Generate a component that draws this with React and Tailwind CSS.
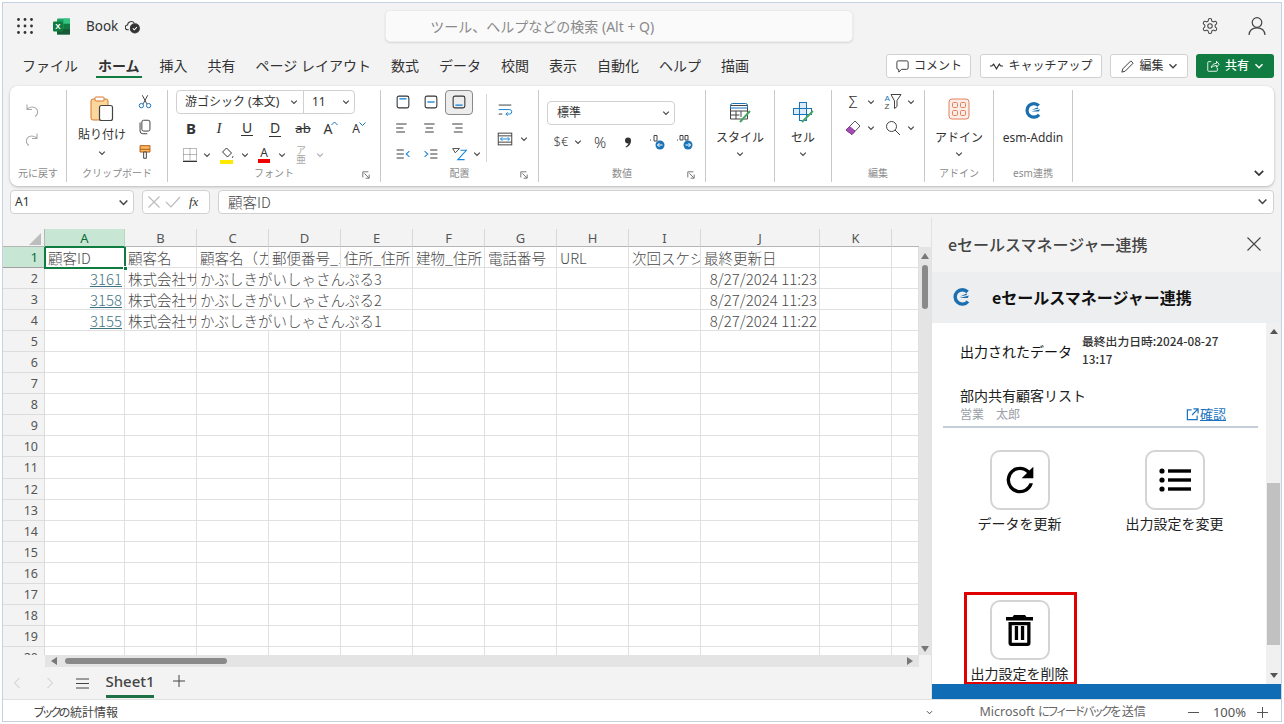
import React from "react";

const UI = { fontFamily: '"Noto Sans","Noto Sans CJK JP",sans-serif' };
const CJK = { fontFamily: '"Noto Sans CJK JP","Noto Sans",sans-serif' };

const Ic = ({ s = 20, children, className = "" }) => (
  <svg width={s} height={s} viewBox="0 0 20 20" fill="none" stroke="currentColor" strokeWidth="1.1" className={`shrink-0 ${className}`}>
    {children}
  </svg>
);

const Chev = ({ w = 8, className = "text-[#444]" }) => (
  <svg width={w} height={w} viewBox="0 0 10 10" fill="none" stroke="currentColor" strokeWidth="1.4" className={`shrink-0 ${className}`}>
    <path d="M1.5 3.2 5 6.8l3.5-3.6" />
  </svg>
);

const Slot = ({ w, h = 26, children, className = "" }) => (
  <div className={`flex items-center justify-center shrink-0 ${className}`} style={{ width: w, height: h }}>{children}</div>
);

const Logo = ({ s = 20 }) => (
  <svg width={s} height={s} viewBox="0 0 20 20" fill="none">
    <path d="M16.6 15A8 8 0 1 1 16.2 4.4" stroke="#1a6fb0" strokeWidth="3.8" />
    <path d="M7.4 11.2 17.6 8.4l-1.2 2.8H7.4Z M7.6 9.4 15 6.2l.6 1.6-8 1.6Z" fill="#1a6fb0" />
  </svg>
);

const Launcher = () => (
  <svg width="8" height="8" viewBox="0 0 10 10" fill="none" stroke="#555" strokeWidth="1">
    <path d="M1 8V1h7M3 3l5.5 5.5M9 4.5V9H4.5" />
  </svg>
);

const Group = ({ w, label, children, launcher, className = "" }) => (
  <div className={`flex shrink-0 h-[92px] border-r border-[#c8c8c8] flex-col relative ${className}`} style={{ width: w }}>
    <div className="flex-1 min-h-0">{children}</div>
    <div className="h-[16px] pb-[2px] flex items-center justify-center text-[10px] leading-none text-[#8c8c8c]">
      {label}
      {launcher && <span className="absolute right-[10px] bottom-[3px] flex"><Launcher /></span>}
    </div>
  </div>
);

const Big = ({ icon, text, label, w, top = "pt-[12px]", gap = "mt-[5px]" }) => (
  <Group w={w} label={label}>
    <div className={`flex flex-col items-center ${top}`}>
      <div className="h-[26px] flex items-center justify-center">{icon}</div>
      <div className={`text-[12px] leading-[16px] ${gap} text-[#333] whitespace-nowrap`}>{text}</div>
      {text !== "esm-Addin" && <div className="mt-[4px] flex"><Chev /></div>}
    </div>
  </Group>
);

const tabs = ["ファイル", "ホーム", "挿入", "共有", "ページ レイアウト", "数式", "データ", "校閲", "表示", "自動化", "ヘルプ", "描画"];

const AlignBox = ({ y }) => (
  <Ic s={18}>
    <rect x="3.5" y="3.5" width="13" height="13" rx="2" stroke="#333" strokeWidth="1.2" />
    <path d={`M6 ${y}h8`} stroke="#1a86d8" strokeWidth="1.5" />
  </Ic>
);
const Lines = ({ a, b, c }) => (
  <Ic s={16}>
    <path d={`M${a} 5h13M${b} 10h9M${c} 15h11`} stroke="#333" strokeWidth="1.2" />
  </Ic>
);

function TitleBar() {
  return (
    <div className="h-[46px] flex items-center shrink-0 relative">
      <div className="w-[44px] flex justify-center">
        <svg width="16" height="16" viewBox="0 0 16 16" fill="#333">
          {[1.5, 8, 14.5].flatMap((y) => [1.5, 8, 14.5].map((x) => <circle key={`${x}-${y}`} cx={x} cy={y} r="1.4" />))}
        </svg>
      </div>
      <svg width="17" height="17" viewBox="0 0 17 17" className="ml-[6px]">
        <rect x="4" y="0.5" width="13" height="16" rx="1" fill="#21a366" />
        <rect x="10.5" y="0.5" width="6.5" height="5.3" fill="#33c481" />
        <rect x="10.5" y="5.8" width="6.5" height="5.3" fill="#107c41" />
        <rect x="4" y="11" width="13" height="5.5" fill="#185c37" />
        <rect x="0" y="3.5" width="10" height="10" rx="1" fill="#107c41" />
        <text x="5" y="11.4" fontSize="8" fontWeight="700" fill="#fff" textAnchor="middle" fontFamily="Liberation Sans">X</text>
      </svg>
      <span className="ml-[16px] text-[13.5px] text-[#333]">Book</span>
      <span className="ml-[7px] text-[#333] flex">
        <svg width="15" height="15" viewBox="0 0 16 16" fill="none" stroke="#333" strokeWidth="1.1">
          <path d="M4 11.5H3a2.5 2.5 0 0 1-.3-5A4 4 0 0 1 10 4.5" />
          <circle cx="10.5" cy="10" r="4.8" fill="#333" />
          <path d="m8.3 10 1.6 1.6 2.8-3" stroke="#fff" />
        </svg>
      </span>
      <div className="ml-[245px] w-[468px] h-[32px] bg-[#fafafa] border border-[#ececec] rounded-[5px] shadow-[0_1px_2px_rgba(0,0,0,0.12)] flex items-center pl-[44px] text-[14px] text-[#8a8a8a]">
        ツール、ヘルプなどの検索 (Alt + Q)
      </div>
      <div className="flex-1" />
      <span className="mr-[28px] text-[#444] flex">
        <svg width="18" height="18" viewBox="0 0 24 24" fill="none" stroke="currentColor" strokeWidth="1.4">
          <path d="M12.2 2h-.4a2 2 0 0 0-2 2v.2a2 2 0 0 1-1 1.7l-.4.3a2 2 0 0 1-2 0l-.2-.1a2 2 0 0 0-2.7.7l-.2.4a2 2 0 0 0 .7 2.7l.2.1a2 2 0 0 1 1 1.7v.5a2 2 0 0 1-1 1.8l-.2.1a2 2 0 0 0-.7 2.7l.2.4a2 2 0 0 0 2.7.7l.2-.1a2 2 0 0 1 2 0l.4.3a2 2 0 0 1 1 1.7v.2a2 2 0 0 0 2 2h.4a2 2 0 0 0 2-2v-.2a2 2 0 0 1 1-1.7l.4-.3a2 2 0 0 1 2 0l.2.1a2 2 0 0 0 2.7-.7l.2-.4a2 2 0 0 0-.7-2.7l-.2-.1a2 2 0 0 1-1-1.8v-.5a2 2 0 0 1 1-1.7l.2-.1a2 2 0 0 0 .7-2.7l-.2-.4a2 2 0 0 0-2.7-.7l-.2.1a2 2 0 0 1-2 0l-.4-.3a2 2 0 0 1-1-1.7V4a2 2 0 0 0-2-2Z" />
          <circle cx="12" cy="12" r="3" />
        </svg>
      </span>
      <span className="mr-[14px] text-[#444] flex">
        <svg width="20" height="20" viewBox="0 0 20 20" fill="none" stroke="currentColor" strokeWidth="1.2">
          <circle cx="10" cy="6.5" r="4.8" />
          <path d="M2 19c.3-4.5 3.4-7.2 8-7.2s7.7 2.7 8 7.2" />
        </svg>
      </span>
    </div>
  );
}

const TopBtn = ({ w, ml, children }) => (
  <div className="h-[24px] border border-[#d1d1d1] bg-white rounded-[3px] flex items-center justify-center gap-[4px] text-[12px] text-[#333] shrink-0" style={{ width: w, marginLeft: ml }}>
    {children}
  </div>
);

function TabRow() {
  return (
    <div className="h-[37px] flex shrink-0 pl-[19px] pr-[7px]">
      <div className="flex gap-[20px] text-[14px] text-[#333] h-[32px] items-center">
        {tabs.map((t) => (
          <div key={t} className={`relative whitespace-nowrap ${t === "ホーム" ? "font-bold" : ""}`}>
            {t}
            {t === "ホーム" && <div className="absolute left-[-2px] right-[-2px] top-[21px] h-[2px] bg-[#107c41]" />}
          </div>
        ))}
      </div>
      <div className="flex-1" />
      <div className="flex pt-[5px]">
        <TopBtn w={85}>
          <svg width="15" height="15" viewBox="0 0 16 16" fill="none" stroke="#333"><path d="M2 3.5A1.5 1.5 0 0 1 3.5 2h9A1.5 1.5 0 0 1 14 3.5v6a1.5 1.5 0 0 1-1.5 1.5H7l-3 3v-3h-.5A1.5 1.5 0 0 1 2 9.5z" /></svg>
          コメント
        </TopBtn>
        <TopBtn w={122} ml={9}>
          <svg width="15" height="10" viewBox="0 0 16 10" fill="none" stroke="#333" strokeWidth="1.2"><path d="M1 5h2l2-2 3 5 3-5 1.5 2H15" /></svg>
          キャッチアップ
        </TopBtn>
        <TopBtn w={78} ml={8}>
          <svg width="15" height="15" viewBox="0 0 16 16" fill="none" stroke="#333"><path d="m2 14 1-3.5L11.5 2 14 4.5 5.5 13z" /></svg>
          編集
          <Chev w={10} />
        </TopBtn>
        <div className="ml-[8px] w-[78px] h-[24px] bg-[#107c41] rounded-[3px] text-white text-[12px] font-medium flex items-center justify-center gap-[5px]">
          <svg width="14" height="14" viewBox="0 0 16 16" fill="none" stroke="#fff"><path d="M6 3H3a1 1 0 0 0-1 1v9a1 1 0 0 0 1 1h9a1 1 0 0 0 1-1v-3M6 10c.5-3.5 3-5 6-5V2.5l3 3.5-3 3.5V7.5c-2.5 0-4.5 1-6 2.5Z" /></svg>
          共有
          <Chev w={10} className="text-white" />
        </div>
      </div>
    </div>
  );
}

function Ribbon() {
  return (
    <div className="mx-[7px] h-[100px] bg-white rounded-[8px] shadow-[0_1px_3px_rgba(0,0,0,0.25)] shrink-0 flex items-center relative text-[#333]">
      <Group w={57} label="元に戻す">
        <div className="flex flex-col items-center pl-[1px] pt-[11px] gap-[9px] text-[#a8a8a8] w-[42px]">
          <Ic><path d="M5 3.5v5h5M5 8.5c3-3.5 8-3 10 0 1.5 2.5.5 5.5-2 7" /></Ic>
          <Ic><path d="M15 3.5v5h-5M15 8.5c-3-3.5-8-3-10 0-1.5 2.5-.5 5.5 2 7" /></Ic>
        </div>
      </Group>
      <Group w={101} label="クリップボード">
        <div className="flex">
          <div className="w-[68px] ml-[1px] flex flex-col items-center pt-[6px]">
            <svg width="24" height="26" viewBox="0 0 24 26" fill="none">
              <rect x="1" y="3" width="17" height="21" rx="2" fill="#fbd79b" stroke="#d9792b" />
              <rect x="5" y="1" width="9" height="4" rx="1" fill="#fff" stroke="#d9792b" />
              <rect x="9.5" y="9.5" width="13" height="15" rx="2" fill="#fff" stroke="#444" strokeWidth="1.2" />
            </svg>
            <div className="text-[12px] leading-[16px] mt-[5px]">貼り付け</div>
            <div className="mt-[6px] flex"><Chev /></div>
          </div>
          <div className="flex flex-col items-center w-[18px] -mt-[1px]">
            <Slot w={20} h={25}>
              <Ic s={18}>
                <path d="M7 2.5 12 12M13 2.5 8 12" stroke="#444" />
                <circle cx="6" cy="14" r="2.4" stroke="#1a74b8" />
                <circle cx="14" cy="14" r="2.4" stroke="#1a74b8" />
              </Ic>
            </Slot>
            <Slot w={20} h={25}>
              <Ic s={18}>
                <rect x="6.5" y="2.5" width="9" height="12" rx="2" stroke="#444" />
                <path d="M4.5 5v9.5a3 3 0 0 0 3 3h5" stroke="#444" />
              </Ic>
            </Slot>
            <Slot w={20} h={26}>
              <Ic s={18}>
                <path d="M4.5 3h11v7h-11z" fill="#fbb962" stroke="#b35c12" />
                <path d="M4.5 7h11" stroke="#b35c12" />
                <path d="M8.5 10h3v7h-3z" fill="#fff" stroke="#444" />
              </Ic>
            </Slot>
          </div>
        </div>
      </Group>
      <Group w={213} label="フォント" launcher>
        <div className="pl-[8px]">
          <div className="w-[179px] h-[24px] border border-[#d1d1d1] rounded-[4px] flex items-center text-[12px]">
            <div className="w-[127px] h-full flex items-center justify-between pl-[8px] pr-[5px] border-r border-[#d1d1d1]">
              <span>游ゴシック (本文)</span>
              <Chev />
            </div>
            <div className="flex-1 flex items-center justify-between pl-[8px] pr-[4px]">
              <span>11</span>
              <Chev />
            </div>
          </div>
          <div className="flex items-center ml-[1px] h-[27px] mt-[1px]">
            <Slot w={28}><span className="text-[15px] font-bold">B</span></Slot>
            <Slot w={28}><span className="text-[15px] italic" style={{ fontFamily: "Liberation Serif" }}>I</span></Slot>
            <Slot w={28}><span className="text-[14px] border-b border-[#333] leading-[14px] px-[1px]">U</span></Slot>
            <Slot w={28}><span className="text-[14px] border-b border-[#333] leading-[14px] px-[1px] pb-[1px]">D</span></Slot>
            <Slot w={28}><span className="text-[13px] line-through">ab</span></Slot>
            <Slot w={28}><span className="text-[14px] relative pr-[6px]">A<svg width="7" height="5" viewBox="0 0 7 5" className="absolute right-0 top-[3px]" fill="none" stroke="#1a74b8"><path d="m.5 4 3-3 3 3" /></svg></span></Slot>
            <Slot w={28}><span className="text-[12px] relative pr-[6px]">A<svg width="7" height="5" viewBox="0 0 7 5" className="absolute right-0 top-[2px]" fill="none" stroke="#1a74b8"><path d="m.5.5 3 3 3-3" /></svg></span></Slot>
          </div>
          <div className="flex items-center h-[26px] ml-[4px]">
            <Slot w={20}>
              <svg width="14" height="14" viewBox="0 0 14 14" fill="none" stroke="#777" strokeDasharray="1 1">
                <path d="M.5.5h13v12H.5zM7 .5v12M.5 6.5h13" />
                <path d="M0 13.5h14" stroke="#333" strokeDasharray="none" />
              </svg>
            </Slot>
            <Slot w={14}><Chev /></Slot>
            <Slot w={26}>
              <svg width="14" height="17" viewBox="0 0 14 17" fill="none" stroke="#333">
                <path d="m6.5 1 5 5-4 4-5-5z" />
                <path d="M13 9c0 1-1 2-1 2" />
                <rect x="0" y="13" width="13" height="4" fill="#ffeb00" stroke="none" />
              </svg>
            </Slot>
            <Slot w={10}><Chev /></Slot>
            <Slot w={28}>
              <div className="flex flex-col items-center leading-none">
                <span className="text-[12px] leading-[12px]">A</span>
                <div className="w-[12px] h-[4px] bg-[#ee0000]" />
              </div>
            </Slot>
            <Slot w={8}><Chev /></Slot>
            <Slot w={30}><span className="text-[10px] text-[#aaa] leading-[9px] text-center">ア<br />亜</span></Slot>
            <Slot w={8}><Chev className="text-[#aaa]" /></Slot>
          </div>
        </div>
      </Group>
      <Group w={158} label="配置" launcher>
        <div className="flex">
          <div className="w-[106px]">
            <div className="flex pl-[8px] items-center h-[26px] -mt-[1px]">
              <Slot w={28} h={26}><AlignBox y={6.5} /></Slot>
              <Slot w={28} h={26}><AlignBox y={10} /></Slot>
              <Slot w={28} h={25} className="border border-[#8a8a8a] rounded-[4px] bg-[#ededed]"><AlignBox y={13.5} /></Slot>
            </div>
            <div className="flex pl-[8px] h-[26px]">
              <Slot w={28}><Lines a={1.5} b={1.5} c={1.5} /></Slot>
              <Slot w={28}><Lines a={1.5} b={3.5} c={2.5} /></Slot>
              <Slot w={28}><Lines a={1.5} b={5.5} c={3.5} /></Slot>
            </div>
            <div className="flex pl-[8px] h-[26px]">
              <Slot w={28}><Ic s={16}><path d="M2 5h9M2 10h9M2 15h9" stroke="#333" strokeWidth="1.2" /><path d="m18 6.5-4 3.5 4 3.5" stroke="#1a86d8" strokeWidth="1.3" /></Ic></Slot>
              <Slot w={28}><Ic s={16}><path d="M9 5h9M9 10h9M9 15h9" stroke="#333" strokeWidth="1.2" /><path d="m2 6.5 4 3.5-4 3.5" stroke="#1a86d8" strokeWidth="1.3" /></Ic></Slot>
              <Slot w={28}><Ic s={17}><path d="M2 3h8L5 8z" stroke="#444" /><path d="M11 5h7l-10 11h8" stroke="#1a86d8" strokeWidth="1.3" /></Ic></Slot>
              <Slot w={8}><Chev /></Slot>
            </div>
          </div>
          <div className="border-l border-[#d5d5d5] h-[68px] mt-[4px] ml-[-1px] pl-[8px]">
            <Slot w={20} h={28} className="mt-[2px]">
              <Ic s={18}><path d="M3 4.5h14M3 14.5h4" stroke="#444" /><path d="M3 9.5h12a2.5 2.5 0 0 1 0 5h-4m2-2-2 2 2 2" stroke="#1a86d8" /></Ic>
            </Slot>
            <div className="flex items-center mt-[1px]">
              <Slot w={20} h={28}>
                <Ic s={18}><rect x="2.5" y="3.5" width="15" height="13" stroke="#444" /><path d="M2.5 6.5h15M2.5 13.5h15" stroke="#444" /><path d="M5 10h10M7 8 5 10l2 2M13 8l2 2-2 2" stroke="#1a86d8" /></Ic>
              </Slot>
              <Slot w={18}><Chev /></Slot>
            </div>
          </div>
        </div>
      </Group>
      <Group w={167} label="数値" launcher>
        <div className="pl-[8px] pt-[11px]">
          <div className="w-[128px] h-[24px] border border-[#d1d1d1] rounded-[4px] flex items-center justify-between pl-[9px] pr-[4px] text-[12px]">
            <span>標準</span><Chev />
          </div>
          <div className="flex items-center h-[26px] mt-[4px] pl-[4px]">
            <Slot w={20}><span className="text-[13px] font-light">$€</span></Slot>
            <Slot w={14}><Chev /></Slot>
            <Slot w={28} className="ml-[1px]"><span className="text-[15px] font-light">%</span></Slot>
            <Slot w={28}>
              <svg width="8" height="11" viewBox="0 0 8 11" fill="#333"><circle cx="4" cy="3.5" r="3" /><path d="M6.8 4C7 7 5 9.5 2 10.5L1.5 9.7C3.5 8.8 4.5 7 4.5 5.5Z" /></svg>
            </Slot>
            <Slot w={29}>
              <svg width="16" height="16" viewBox="0 0 16 16" fill="none"><path d="M1 6h1M5 1.5h3V7H5z" stroke="#444" /><circle cx="11" cy="11" r="4.5" fill="#1a74b8" /><path d="M13.5 11h-5m2-2-2 2 2 2" stroke="#fff" /></svg>
            </Slot>
            <Slot w={28}>
              <svg width="16" height="16" viewBox="0 0 16 16" fill="none"><path d="M0 6h1M3 1.5h3V6H3zM8 1.5h3V6H8z" stroke="#444" /><circle cx="11" cy="11" r="4.5" fill="#1a74b8" /><path d="M8.5 11h5m-2-2 2 2-2 2" stroke="#fff" /></svg>
            </Slot>
          </div>
        </div>
      </Group>
      <Big w={69} text="スタイル" top="pt-[9px]" icon={
        <svg width="22" height="22" viewBox="0 0 22 22" fill="none" stroke="#444">
          <path d="M1.5 4.5h17V18h-17zM1.5 10h17M1.5 14h9M7 10v8M12 10v6" />
          <path d="M1.5 4.5a2 2 0 0 1 2-2h13a2 2 0 0 1 2 2v2.5h-17z" stroke="#1a74b8" />
          <path d="M11 21 21 10" stroke="#4aa564" strokeWidth="2" />
        </svg>} />
      <Big w={57} text="セル" top="pt-[9px]" icon={
        <svg width="22" height="22" viewBox="0 0 22 22" fill="none" stroke="#1a74b8">
          <rect x="7.5" y="1.5" width="7" height="6" fill="#dcecf8" />
          <rect x="1.5" y="7.5" width="7" height="6" fill="#dcecf8" />
          <rect x="7.5" y="7.5" width="7" height="6" fill="#dcecf8" />
          <rect x="14.5" y="7.5" width="5" height="6" />
          <rect x="7.5" y="13.5" width="7" height="6" />
          <path d="M10 21 21 10" stroke="#4aa564" strokeWidth="2" />
        </svg>} />
      <Group w={93} label="編集">
        <div className="pl-[10px]">
          <div className="flex items-center h-[26px] -mt-[1px]">
            <Slot w={22}><span className="text-[16px] font-light">Σ</span></Slot>
            <Slot w={14}><Chev /></Slot>
            <Slot w={28} className="ml-[1px]">
              <svg width="18" height="18" viewBox="0 0 18 18" fill="none" stroke="#444"><path d="M7 1.5h10l-4 6v6l-2.5 2V8z" /><text x="0.5" y="8" fontSize="8" fill="#1a74b8" stroke="none" fontFamily="Liberation Sans">A</text><text x="0.5" y="16" fontSize="8" fill="#444" stroke="none" fontFamily="Liberation Sans">Z</text></svg>
            </Slot>
            <Slot w={8}><Chev /></Slot>
          </div>
          <div className="flex items-center h-[26px]">
            <Slot w={22}>
              <svg width="17" height="16" viewBox="0 0 17 16"><path d="m1 10 6 4.5L15 6l-5-5z" fill="#fff" stroke="#555" /><path d="m1 10 6 4.5L10 11 4.5 6.5z" fill="#a64db5" stroke="#843a95" /></svg>
            </Slot>
            <Slot w={14}><Chev /></Slot>
            <Slot w={28} className="ml-[1px]">
              <svg width="16" height="16" viewBox="0 0 16 16" fill="none" stroke="#444"><circle cx="6.5" cy="6.5" r="5" /><path d="m10 10 5 5" /></svg>
            </Slot>
            <Slot w={8}><Chev /></Slot>
          </div>
        </div>
      </Group>
      <Big w={69} text="アドイン" label="アドイン" top="pt-[6px]" gap="mt-[8px]" icon={
        <svg width="22" height="22" viewBox="0 0 22 22" fill="none">
          <rect x="1" y="1" width="20" height="20" rx="3" fill="#fbeee8" stroke="#e5805c" />
          <g stroke="#e5805c"><rect x="4.5" y="4.5" width="5" height="5" rx="1.2" /><rect x="12.5" y="4.5" width="5" height="5" rx="1.2" /><rect x="4.5" y="12.5" width="5" height="5" rx="1.2" /><rect x="12.5" y="12.5" width="5" height="5" rx="1.2" /></g>
        </svg>} />
      <Big w={79} text="esm-Addin" label="esm連携" top="pt-[7px]" gap="mt-[7px]" icon={<Logo s={17} />} />
      <span className="absolute right-[9px] bottom-[7px] flex"><Chev w={12} className="text-[#333]" /></span>
    </div>
  );
}

function FormulaBar() {
  return (
    <div className="h-[24px] mt-[4px] mx-[7px] flex shrink-0 text-[#333]">
      <div className="w-[124px] bg-white border border-[#d1d1d1] rounded-[4px] flex items-center justify-between pl-[4px] pr-[4px] text-[12px]">
        A1<Chev w={11} />
      </div>
      <div className="w-[68px] ml-[8px] bg-white border border-[#d1d1d1] rounded-[4px] flex items-center pl-[4px] gap-[4px]">
        <svg width="14" height="14" viewBox="0 0 14 14" fill="none" stroke="#bcbcbc" strokeWidth="1.2"><path d="m1.5 1.5 11 11m0-11-11 11" /></svg>
        <svg width="16" height="14" viewBox="0 0 16 14" fill="none" stroke="#bcbcbc" strokeWidth="1.2"><path d="m1 7 5 5L15 2" /></svg>
        <span className="ml-[4px] text-[13px] italic" style={{ fontFamily: "Liberation Serif" }}>fx</span>
      </div>
      <div className="flex-1 ml-[8px] bg-white border border-[#d1d1d1] rounded-[4px] flex items-center justify-between pl-[9px] pr-[5px] pb-[1px] text-[14.5px] font-light text-[#444]" style={CJK}>
        顧客ID<Chev w={11} />
      </div>
    </div>
  );
}

const cols = [["A", 80], ["B", 72], ["C", 72], ["D", 72], ["E", 72], ["F", 72], ["G", 72], ["H", 72], ["I", 72], ["J", 119], ["K", 72], ["", 27]];
const headRow = ["顧客ID", "顧客名", "顧客名（カナ）", "郵便番号_1", "住所_住所", "建物_住所", "電話番号", "URL", "次回スケジュール", "最終更新日", "", ""];
const data = { 2: ["3161", "3"], 3: ["3158", "2"], 4: ["3155", "1"] };
const dates = { 2: "8/27/2024 11:23", 3: "8/27/2024 11:23", 4: "8/27/2024 11:22" };

function Row({ n }) {
  const sel = n === 1;
  const d = data[n];
  return (
    <div className="flex h-[21.06px] shrink-0">
      <div className={`w-[42px] shrink-0 border-r border-b text-[12.5px] text-right pr-[6px] leading-[21px] ${sel ? "bg-[#c7e6d3] text-[#0e6b38] border-[#a0a0a0]" : "bg-[#f3f3f3] text-[#555] border-[#dcdcdc]"}`}>{n}</div>
      {cols.map(([c, w], i) => {
        const merged = d && (i === 2 || i === 3);
        const txt = sel ? headRow[i] : d && i === 1 ? "株式会社サンプル" : d && i === 2 ? `かぶしきがいしゃさんぷる${d[1]}` : null;
        return (
          <div key={i} className={`shrink-0 border-b border-[#e0e0e0] relative h-[21.06px] ${merged ? "" : "border-r"} ${i === 2 && d ? "" : "overflow-hidden"}`} style={{ width: w }}>
            {txt && <div className={`absolute top-0 left-[3px] leading-[22px] text-[14.5px] font-light whitespace-nowrap text-[#4a4a4a] ${i === 2 && d ? "z-10" : ""}`} style={CJK}>{txt}</div>}
            {d && i === 0 && <div className="text-right pr-[2px] leading-[22px] text-[15px] font-light text-[#3f7484] underline" style={CJK}>{d[0]}</div>}
            {d && i === 9 && <div className="text-right pr-[2px] leading-[22px] text-[15px] font-light text-[#4a4a4a]" style={CJK}>{dates[n]}</div>}
          </div>
        );
      })}
    </div>
  );
}

function Grid() {
  const rows = Array.from({ length: 20 }, (_, i) => i + 1);
  return (
    <div className="w-[928px] flex flex-col shrink-0 relative">
      <div className="h-[11px] shrink-0" />
      <div className="flex h-[18px] shrink-0">
        <div className="w-[42px] shrink-0 border-r border-b border-[#b5b5b5] flex items-end justify-end pr-[3px] pb-[1px]">
          <div className="w-0 h-0 border-l-[12px] border-l-transparent border-b-[12px] border-b-[#bdbdbd]" />
        </div>
        {cols.map(([c, w], i) => (
          <div key={i} className={`shrink-0 text-center text-[13px] leading-[18px] border-b ${i === 11 ? "" : "border-r"} ${i === 0 ? "bg-[#c7e6d3] text-[#0e6b38] border-b-[#107c41] border-r-[#b5d8c3]" : "text-[#555] border-r-[#d8d8d8] border-b-[#b5b5b5]"}`} style={{ width: w }}>{c}</div>
        ))}
      </div>
      <div className="flex flex-1 min-h-0">
        <div className="flex-1 min-w-0 relative overflow-hidden flex flex-col bg-white">
          {rows.map((n) => <Row key={n} n={n} />)}
          <div className="absolute left-[41px] top-[-1px] w-[82px] h-[23px] border-2 border-[#107c41]">
            <div className="absolute right-[-4px] bottom-[-4px] w-[5px] h-[5px] bg-[#107c41] border border-white" />
          </div>
        </div>
        <div className="w-[12px] bg-[#e4e4e4] shrink-0 flex flex-col items-center relative">
          <div className="mt-[6px] w-0 h-0 border-x-[4px] border-x-transparent border-b-[6px] border-b-[#777]" />
          <div className="w-[6px] h-[44px] bg-[#8a8a8a] rounded-full mt-[6px]" />
          <div className="flex-1" />
          <div className="mb-[3px] w-0 h-0 border-x-[4px] border-x-transparent border-t-[6px] border-t-[#777]" />
        </div>
      </div>
      <div className="h-[12px] shrink-0 flex">
        <div className="w-[42px] bg-[#f3f3f3] shrink-0" />
        <div className="flex-1 bg-[#e4e4e4] flex items-center pl-[6px] pr-[6px]">
          <div className="w-0 h-0 border-y-[4px] border-y-transparent border-r-[6px] border-r-[#777]" />
          <div className="ml-[8px] w-[162px] h-[6px] rounded-full bg-[#8a8a8a]" />
          <div className="flex-1" />
          <div className="w-0 h-0 border-y-[4px] border-y-transparent border-l-[6px] border-l-[#777]" />
        </div>
        <div className="w-[12px] bg-[#f3f3f3]" />
      </div>
      <div className="h-[32px] shrink-0 flex items-center text-[#333]">
        <svg width="10" height="12" viewBox="0 0 10 12" fill="none" stroke="#c8c8c8" className="ml-[9px]"><path d="M7.5 1 2.5 6l5 5" /></svg>
        <svg width="10" height="12" viewBox="0 0 10 12" fill="none" stroke="#c8c8c8" className="ml-[23px]"><path d="m2.5 1 5 5-5 5" /></svg>
        <svg width="13" height="11" viewBox="0 0 13 11" fill="none" stroke="#444" className="ml-[21px]"><path d="M0 1h13M0 5.5h13M0 10h13" /></svg>
        <div className="ml-[17px] w-[48px] h-full relative flex items-center justify-center text-[15px] font-medium text-[#444] pb-[4px]">
          Sheet1
          <div className="absolute left-0 right-0 bottom-[1px] h-[3px] bg-[#1e7145]" />
        </div>
        <svg width="12" height="12" viewBox="0 0 12 12" fill="none" stroke="#444" className="ml-[19px] mb-[4px]"><path d="M6 0v12M0 6h12" /></svg>
      </div>
    </div>
  );
}

const PanelBtn = ({ label, children }) => (
  <div className="h-[150px] flex flex-col items-center">
    <div className="w-[60px] h-[60px] border-2 border-[#d4d4d4] rounded-[10px] bg-white flex items-center justify-center shrink-0">{children}</div>
    <div className="mt-[3px] text-[14px] leading-[20px] text-[#222] whitespace-nowrap" style={CJK}>{label}</div>
  </div>
);

function Panel() {
  return (
    <div className="flex-1 min-w-0 border-l border-[#e2e2e2] flex flex-col relative overflow-hidden" style={CJK}>
      <div className="h-[54px] shrink-0 flex items-center justify-between pl-[16px] pr-[20px] bg-[#f3f3f3] pb-[2px]">
        <span className="text-[16px] font-medium text-[#444]">eセールスマネージャー連携</span>
        <svg width="14" height="14" viewBox="0 0 14 14" fill="none" stroke="#444" strokeWidth="1.1"><path d="m.5.5 13 13m0-13-13 13" /></svg>
      </div>
      <div className="h-[51px] shrink-0 bg-[#edeef0] flex items-center pl-[21px] pb-[2px]">
        <Logo s={18} />
        <span className="ml-[21px] text-[16px] font-bold text-[#111]">eセールスマネージャー連携</span>
      </div>
      <div className="flex-1 min-h-0 flex">
        <div className="flex-1 min-w-0 bg-white overflow-hidden relative">
          <div className="pl-[28px] pr-[40px] pt-[9px] flex">
            <span className="text-[14px] leading-[20px] text-[#111] mt-[9px] whitespace-nowrap">出力されたデータ</span>
            <span className="ml-[10px] text-[11.8px] leading-[18px] font-medium text-[#333]">最終出力日時:2024-08-27<br />13:17</span>
          </div>
          <div className="pl-[28px] mt-[17px] text-[14px] leading-[20px] text-[#222]">部内共有顧客リスト</div>
          <div className="ml-[11px] mr-[8px] pl-[17px] pr-[32px] flex justify-between items-end h-[23px] border-b-2 border-[#c5ced8] pb-[3px]">
            <span className="text-[12px] leading-[16px] text-[#9aa0a6] mb-[1px]">営業　太郎</span>
            <span className="text-[13px] leading-[18px] text-[#1a73c0] flex items-center gap-[1px]">
              <svg width="13" height="13" viewBox="0 0 14 14" fill="none" stroke="#1a73c0" strokeWidth="1.3"><path d="M6 2H1.5v10.5H12V8M8 1h5v5M13 1 6.5 7.5" /></svg>
              <u>確認</u>
            </span>
          </div>
          <div className="grid grid-cols-[155px_155px] pl-[10px] mt-[22px]">
            <PanelBtn label="データを更新">
              <svg width="40" height="40" viewBox="0 0 24 24" fill="#000"><path d="M17.65 6.35A7.96 7.96 0 0 0 12 4a8 8 0 1 0 7.75 10h-2.08A6 6 0 1 1 12 6c1.66 0 3.14.69 4.22 1.78L13 11h7V4z" /></svg>
            </PanelBtn>
            <PanelBtn label="出力設定を変更">
              <svg width="32" height="24" viewBox="0 0 32 24" fill="#000">
                <circle cx="3" cy="3" r="2.6" /><circle cx="3" cy="12" r="2.6" /><circle cx="3" cy="21" r="2.6" />
                <rect x="9" y="1.3" width="23" height="3.4" /><rect x="9" y="10.3" width="23" height="3.4" /><rect x="9" y="19.3" width="23" height="3.4" />
              </svg>
            </PanelBtn>
            <PanelBtn label="出力設定を削除">
              <svg width="27" height="31" viewBox="0 0 27 31" fill="#000">
                <path d="M8 0h11l1.5 2H27v3.5H0V2h6.5z" />
                <path d="M2.5 7h22v21a3 3 0 0 1-3 3h-16a3 3 0 0 1-3-3zM5.8 10.3v17.4h15.4V10.3z" fillRule="evenodd" />
                <rect x="8.8" y="11" width="3.3" height="14" /><rect x="14.9" y="11" width="3.3" height="14" />
              </svg>
            </PanelBtn>
          </div>
          <div className="absolute left-[32px] top-[269px] w-[113px] h-[93px] border-[3px] border-[#e00000]" />
        </div>
        <div className="w-[15px] shrink-0 bg-[#f0f0f0] flex flex-col items-center">
          <div className="mt-[6px] w-0 h-0 border-x-[4px] border-x-transparent border-b-[5px] border-b-[#555]" />
          <div className="w-[13px] h-[162px] bg-[#c1c1c1] mt-[149px]" />
          <div className="flex-1" />
          <div className="mb-[6px] w-0 h-0 border-x-[4px] border-x-transparent border-t-[5px] border-t-[#555]" />
        </div>
      </div>
      <div className="h-[15px] shrink-0 bg-[#0f6cb5]" />
    </div>
  );
}

function StatusBar() {
  return (
    <div className="h-[22px] shrink-0 bg-white border-t border-[#e0e0e0] flex items-center text-[12px] text-[#555] pt-[4px]">
      <span className="ml-[30px] text-[#444] whitespace-nowrap"><span className="tracking-[-3.5px]">ブックの</span><span className="ml-[3px]">統計情報</span></span>
      <div className="flex-1" />
      <Chev w={7} />
      <span className="ml-[46px] text-[12.5px] text-[#666] whitespace-nowrap">Microsoft <span className="text-[12px] tracking-[-3px]">にフィードバックを</span><span className="ml-[3px] text-[12px]">送信</span></span>
      <svg width="11" height="11" viewBox="0 0 11 11" stroke="#555" className="ml-[42px]"><path d="M0 5.5h11" /></svg>
      <span className="ml-[14px] text-[13px]">100%</span>
      <svg width="11" height="11" viewBox="0 0 11 11" stroke="#555" className="ml-[11px] mr-[13px]"><path d="M0 5.5h11M5.5 0v11" /></svg>
    </div>
  );
}

export default function App() {
  return (
    <div className="w-[1284px] h-[724px] bg-white p-[2px] overflow-hidden" style={UI}>
      <div className="w-full h-full border border-[#c6d0e3] bg-[#f3f3f3] flex flex-col overflow-hidden">
        <TitleBar />
        <TabRow />
        <Ribbon />
        <FormulaBar />
        <div className="flex flex-1 min-h-0 mt-[4px]">
          <Grid />
          <Panel />
        </div>
        <StatusBar />
      </div>
    </div>
  );
}
